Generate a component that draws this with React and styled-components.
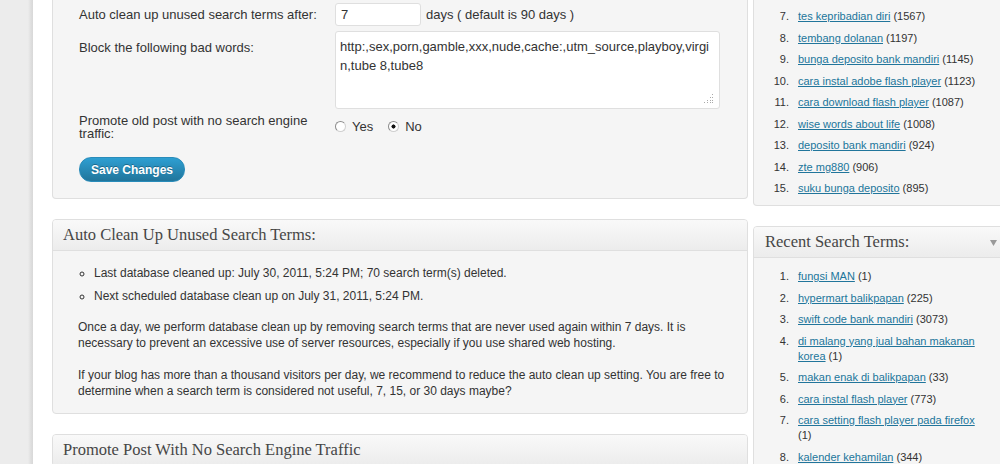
import React from 'react';
import styled, { createGlobalStyle } from 'styled-components';

const GlobalStyle = createGlobalStyle`
  html, body {
    margin: 0;
    padding: 0;
    background: #fff;
    overflow: hidden;
  }
  body {
    font-family: "Liberation Sans", Arial, sans-serif;
    font-size: 13px;
    color: #333;
  }
`;

const topTerms = [
  { n: 7, term: 'tes kepribadian diri', count: 1567 },
  { n: 8, term: 'tembang dolanan', count: 1197 },
  { n: 9, term: 'bunga deposito bank mandiri', count: 1145 },
  { n: 10, term: 'cara instal adobe flash player', count: 1123 },
  { n: 11, term: 'cara download flash player', count: 1087 },
  { n: 12, term: 'wise words about life', count: 1008 },
  { n: 13, term: 'deposito bank mandiri', count: 924 },
  { n: 14, term: 'zte mg880', count: 906 },
  { n: 15, term: 'suku bunga deposito', count: 895 },
];

const recentTerms = [
  { term: 'fungsi MAN', count: 1 },
  { term: 'hypermart balikpapan', count: 225 },
  { term: 'swift code bank mandiri', count: 3073 },
  { term: 'di malang yang jual bahan makanan korea', count: 1 },
  { term: 'makan enak di balikpapan', count: 33 },
  { term: 'cara instal flash player', count: 773 },
  { term: 'cara setting flash player pada firefox', count: 1 },
  { term: 'kalender kehamilan', count: 344 },
];

function App() {
  return (
    <>
      <GlobalStyle />
      <Page>
        <AdminMenu />
        <Wrap>
          <MainColumn>
            <Box cut>
              <Form>
                <Row>
                  <Label>Auto clean up unused search terms after:</Label>
                  <Field>
                    <TextInput>7</TextInput>
                    <span>days ( default is 90 days )</span>
                  </Field>
                </Row>
                <Row top gap={5}>
                  <Label pad={9}>Block the following bad words:</Label>
                  <TextArea>
                    http:,sex,porn,gamble,xxx,nude,cache:,utm_source,playboy,virgin,tube 8,tube8
                    <Grip width="10" height="10" viewBox="0 0 10 10">
                      <rect x="8" y="0" width="1" height="1" />
                      <rect x="6" y="3" width="1" height="1" />
                      <rect x="8" y="3" width="1" height="1" />
                      <rect x="3" y="6" width="1" height="1" />
                      <rect x="6" y="6" width="1" height="1" />
                      <rect x="8" y="6" width="1" height="1" />
                      <rect x="0" y="8" width="1" height="1" />
                      <rect x="3" y="8" width="1" height="1" />
                      <rect x="6" y="8" width="1" height="1" />
                      <rect x="8" y="8" width="1" height="1" />
                    </Grip>
                  </TextArea>
                </Row>
                <Row gap={5}>
                  <Label tight>Promote old post with no search engine traffic:</Label>
                  <Field lift>
                    <Choice>
                      <Radio />
                      Yes
                    </Choice>
                    <Choice>
                      <Radio checked />
                      No
                    </Choice>
                  </Field>
                </Row>
                <SaveButton>Save Changes</SaveButton>
              </Form>
            </Box>

            <Box>
              <BoxTitle>Auto Clean Up Unused Search Terms:</BoxTitle>
              <BoxBody>
                <Bullets>
                  <li>Last database cleaned up: July 30, 2011, 5:24 PM; 70 search term(s) deleted.</li>
                  <li>Next scheduled database clean up on July 31, 2011, 5:24 PM.</li>
                </Bullets>
                <Para>
                  Once a day, we perform database clean up by removing search terms that are never used again
                  within 7 days. It is necessary to prevent an excessive use of server resources, especially if
                  you use shared web hosting.
                </Para>
                <Para>
                  If your blog has more than a thousand visitors per day, we recommend to reduce the auto clean up
                  setting. You are free to determine when a search term is considered not useful, 7, 15, or 30
                  days maybe?
                </Para>
              </BoxBody>
            </Box>

            <Box>
              <BoxTitle>Promote Post With No Search Engine Traffic</BoxTitle>
            </Box>
          </MainColumn>

          <SideColumn>
            <Box cut>
              <TermList start={7} first={9}>
                {topTerms.map((t) => (
                  <li key={t.n}>
                    <a href="#">{t.term}</a> ({t.count})
                  </li>
                ))}
              </TermList>
            </Box>
            <Box>
              <BoxTitle side>
                Recent Search Terms:
                <Toggle width="7" height="6" viewBox="0 0 7 6">
                  <path d="M0 0 H7 L3.5 6 Z" />
                </Toggle>
              </BoxTitle>
              <TermList first={11}>
                {recentTerms.map((t) => (
                  <li key={t.term}>
                    <a href="#">{t.term}</a> ({t.count})
                  </li>
                ))}
              </TermList>
            </Box>
          </SideColumn>
        </Wrap>
      </Page>
    </>
  );
}

export default App;

const Page = styled.div`
  display: flex;
  height: 464px;
  overflow: hidden;
`;

const AdminMenu = styled.div`
  flex: 0 0 33px;
  background: linear-gradient(to right, #ececec 0, #ececec 28px, #dedede 31px, #d8d8d8 33px);
`;

const Wrap = styled.div`
  display: flex;
  gap: 5px;
  padding-left: 19px;
  align-items: flex-start;
`;

const MainColumn = styled.div`
  flex: 0 0 696px;
  display: flex;
  flex-direction: column;
  gap: 20px;
`;

const SideColumn = styled.div`
  flex: 0 0 252px;
  display: flex;
  flex-direction: column;
  gap: 20px;
`;

const Box = styled.div`
  background: #f5f5f5;
  border: 1px solid #dfdfdf;
  border-radius: 4px;
  ${(p) => p.cut && 'border-top: none; border-top-left-radius: 0; border-top-right-radius: 0;'}
`;

const BoxTitle = styled.h3`
  margin: 0;
  height: 30px;
  display: flex;
  align-items: center;
  justify-content: space-between;
  padding: 0 ${(p) => (p.side ? '7px' : '10px')} 0 ${(p) => (p.side ? '11px' : '10px')};
  font-family: "Liberation Serif", Georgia, serif;
  font-size: 16.5px;
  font-weight: normal;
  color: #464646;
  background: linear-gradient(to bottom, #f9f9f9, #ececec);
  border-bottom: 1px solid #dfdfdf;
  border-radius: 3px 3px 0 0;
`;

const Toggle = styled.svg`
  fill: #999;
  margin-top: 1px;
`;

const Form = styled.div`
  display: flex;
  flex-direction: column;
  padding: 3px 0 16px 26px;
`;

const Row = styled.div`
  display: grid;
  grid-template-columns: 256px 1fr;
  align-items: ${(p) => (p.top ? 'start' : 'center')};
  margin-top: ${(p) => p.gap || 0}px;
`;

const Label = styled.div`
  padding-right: 10px;
  padding-top: ${(p) => p.pad || 0}px;
  line-height: ${(p) => (p.tight ? '13px' : '15px')};
`;

const Field = styled.div`
  display: flex;
  align-items: center;
  gap: 5px;
  ${(p) => p.lift && 'margin-top: -2px;'}
`;

const TextInput = styled.div`
  box-sizing: border-box;
  width: 86px;
  height: 23px;
  padding: 3px 5px;
  line-height: 15px;
  background: #fff;
  border: 1px solid #dfdfdf;
  border-radius: 3px;
`;

const TextArea = styled.div`
  position: relative;
  box-sizing: border-box;
  width: 385px;
  height: 78px;
  padding: 5px 4px;
  line-height: 19px;
  font-size: 13px;
  word-break: break-all;
  background: #fff;
  border: 1px solid #dfdfdf;
  border-radius: 3px;
`;

const Grip = styled.svg`
  position: absolute;
  right: 5px;
  bottom: 4px;
  fill: #aaa;
`;

const Choice = styled.label`
  display: inline-flex;
  align-items: center;
  gap: 6px;
  margin-right: 10px;
  line-height: 15px;
`;

const Radio = styled.span`
  box-sizing: border-box;
  width: 11px;
  height: 11px;
  border-radius: 50%;
  border: 1px solid #8c8c8c;
  border-right-color: #d0d0d0;
  border-bottom-color: #d0d0d0;
  background: ${(p) => (p.checked ? 'radial-gradient(circle, #111 0 1.8px, #fff 2.3px)' : '#fff')};
`;

const SaveButton = styled.button`
  align-self: flex-start;
  margin-top: 17px;
  height: 25px;
  padding: 0 11px;
  font-family: "Liberation Sans", Arial, sans-serif;
  font-size: 12px;
  font-weight: bold;
  color: #fff;
  text-shadow: 0 -1px 0 rgba(0, 0, 0, 0.3);
  background: linear-gradient(to bottom, #2e9fd2, #21759b);
  border: 1px solid #298cba;
  border-radius: 12px;
`;

const BoxBody = styled.div`
  padding: 14px 15px 14px 25px;
  font-size: 12px;
`;

const Bullets = styled.ul`
  list-style: circle;
  margin: 0 0 15px;
  padding-left: 16px;
  li {
    line-height: 16px;
    margin-bottom: 7px;
  }
  li:last-child {
    margin-bottom: 0;
  }
`;

const Para = styled.p`
  margin: 0 0 16px;
  line-height: 16px;
  &:last-child {
    margin-bottom: 0;
  }
`;

const TermList = styled.ol`
  margin: 0;
  padding: ${(p) => p.first || 0}px 18px 9px 38px;
  font-size: 11px;
  li {
    line-height: 15px;
    margin-bottom: 6.5px;
    padding-left: 6px;
  }
  li:last-child {
    margin-bottom: 0;
  }
  a {
    color: #21759b;
  }
`;
